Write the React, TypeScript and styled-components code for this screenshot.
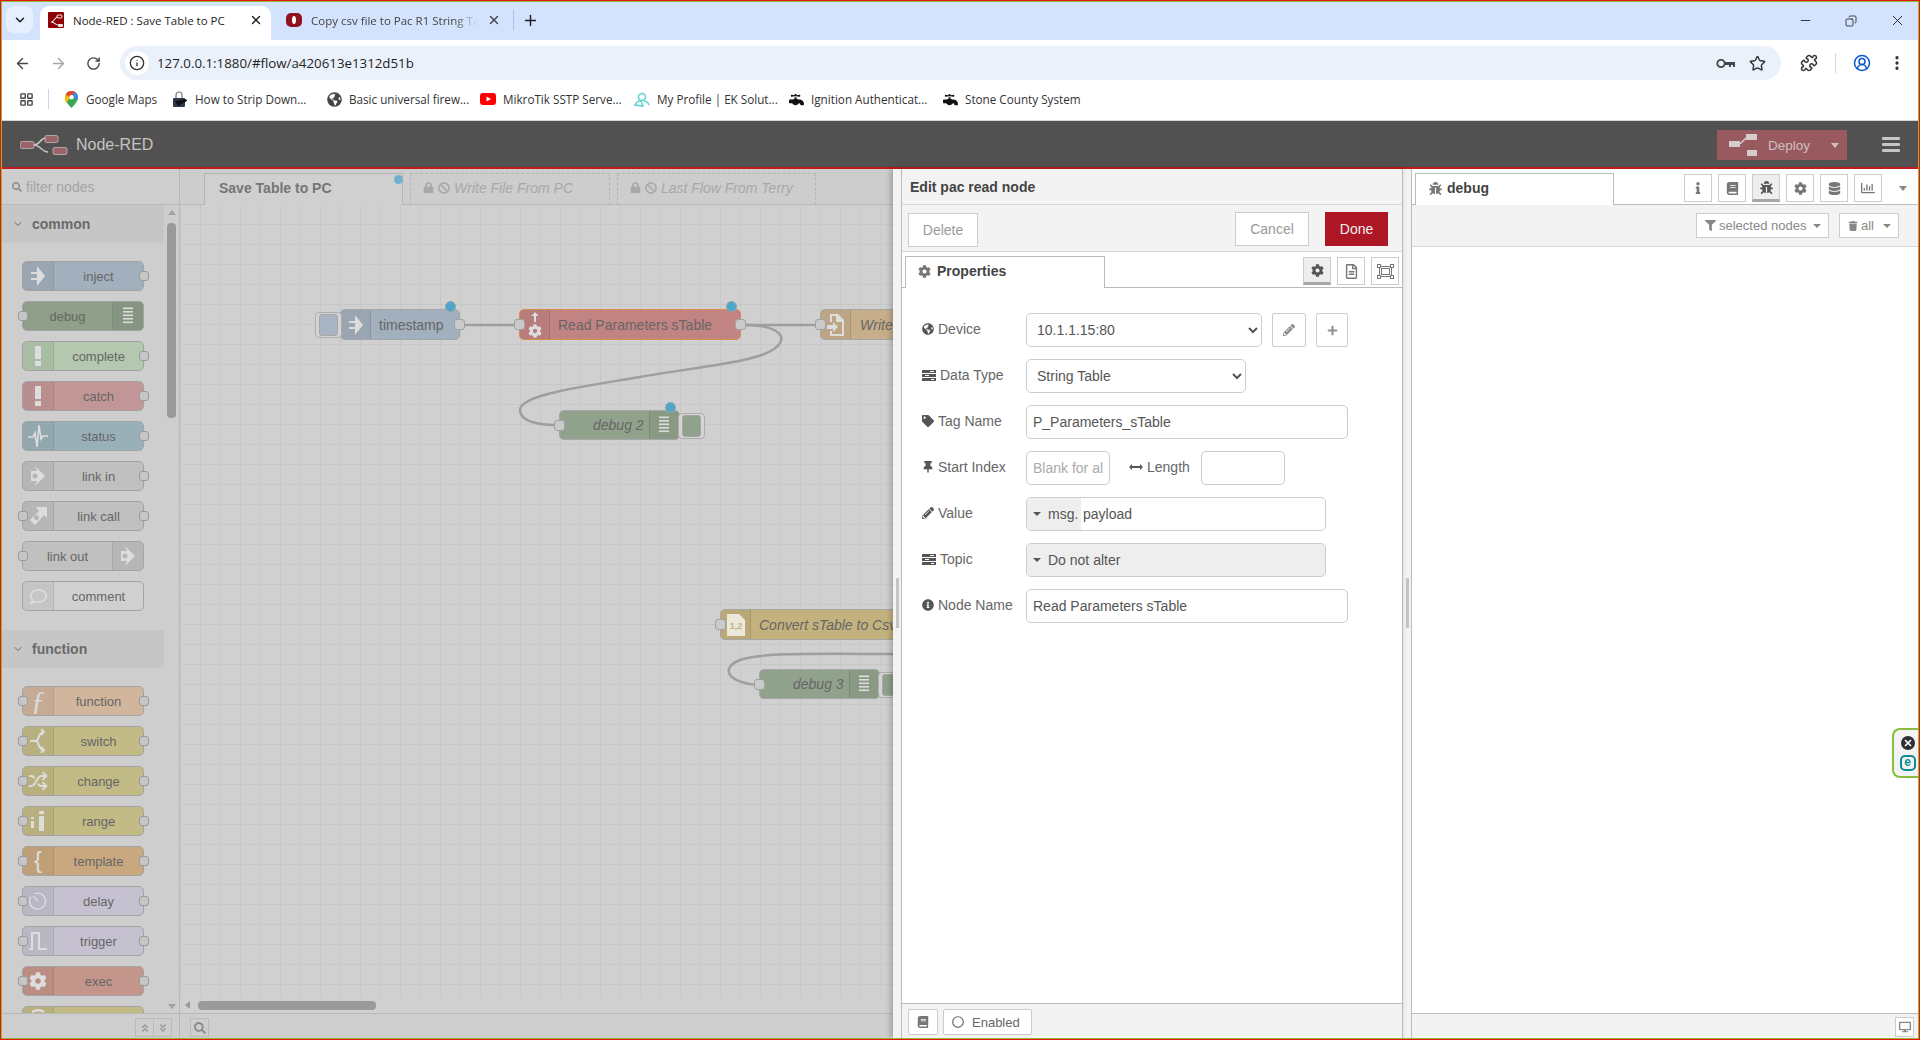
import React from 'react'
import styled, { createGlobalStyle } from 'styled-components'
import {
  ArrowLeft,
  ArrowRight,
  ChevronDown,
  CircleUserRound,
  Copy,
  EllipsisVertical,
  Info,
  LayoutGrid,
  Minus,
  Plus,
  Puzzle,
  RotateCw,
  Shuffle,
  Star,
  X,
} from 'lucide-react'
import {
  FaBan,
  FaBook,
  FaBug,
  FaCog,
  FaDatabase,
  FaDesktop,
  FaFaucet,
  FaFilter,
  FaGlobeAmericas,
  FaInfo,
  FaInfoCircle,
  FaLock,
  FaPencilAlt,
  FaPlus,
  FaRegChartBar,
  FaRegComment,
  FaRegFileAlt,
  FaSearch,
  FaTag,
  FaThumbtack,
  FaTrash,
  FaAngleDoubleDown,
  FaAngleDoubleUp,
  FaRegCircle,
} from 'react-icons/fa'

const GlobalStyle = createGlobalStyle`
  html, body { margin: 0; padding: 0; background: #fff; }
  * { box-sizing: border-box; }
  #root { width: 1920px; height: 1040px; overflow: hidden; }
`

const arial = `'Liberation Sans', Arial, sans-serif`
const segoe = `'Open Sans', 'Noto Sans', sans-serif`

const Frame = styled.div`
  position: relative;
  width: 1920px;
  height: 1040px;
  border: 1px solid #f01010;
  display: flex;
  flex-direction: column;
  overflow: hidden;
  font-family: ${arial};
  &::after {
    content: '';
    position: absolute;
    inset: 0;
    border: 1px solid #86bf3c;
    pointer-events: none;
    z-index: 20;
  }
`

/* browser chrome */
const TabStrip = styled.div`
  height: 39px;
  flex: none;
  background: #d3e3fd;
  display: flex;
  align-items: flex-end;
  padding-left: 5px;
  color: #1f1f1f;
  font-family: ${segoe};
  font-size: 11.5px;
`
const TabMenu = styled.div`
  width: 27px;
  height: 27px;
  margin-bottom: 7px;
  margin-right: 7px;
  background: #e6effe;
  border-radius: 8px;
  display: flex;
  align-items: center;
  justify-content: center;
`
const BrowserTab = styled.div<{ $active?: boolean; $w: number }>`
  width: ${(p) => p.$w}px;
  height: 34px;
  display: flex;
  align-items: center;
  padding: 0 ${(p) => (p.$active ? 8 : 10)}px 6px ${(p) => (p.$active ? 8 : 15)}px;
  gap: 9px;
  border-radius: 9px 9px 0 0;
  background: ${(p) => (p.$active ? '#fff' : 'transparent')};
  color: ${(p) => (p.$active ? '#1f1f1f' : '#444')};
  position: relative;
`
const TabTitle = styled.span<{ $fade?: boolean }>`
  flex: 1;
  white-space: nowrap;
  overflow: hidden;
  ${(p) => p.$fade && 'mask-image: linear-gradient(to right, #000 85%, transparent);'}
`
const TabSep = styled.div`
  width: 1px;
  height: 20px;
  background: #a8c0e4;
  margin: 0 8px 10px 2px;
`
const NewTab = styled.div`
  margin-bottom: 11px;
  display: flex;
`
const WindowControls = styled.div`
  margin-left: auto;
  align-self: center;
  display: flex;
  align-items: center;
  gap: 32px;
  padding-right: 13px;
`
const RestoreIcon = styled(Copy)`
  transform: scaleX(-1);
`
const Toolbar = styled.div`
  height: 40px;
  flex: none;
  background: #fff;
  display: flex;
  align-items: flex-end;
  padding: 0 0 0 13px;
  color: #474747;
`
const NavIcons = styled.div`
  display: flex;
  gap: 19px;
  align-items: center;
  height: 34px;
  margin-right: 19px;
`
const Omnibox = styled.div`
  width: 1661px;
  height: 34px;
  flex: none;
  background: #ebf1fa;
  border-radius: 17px;
  display: flex;
  align-items: center;
  padding: 0 15px 0 5px;
  font-family: ${segoe};
  font-size: 13.3px;
  color: #1f1f1f;
`
const InfoDot = styled.div`
  width: 24px;
  height: 24px;
  border-radius: 50%;
  background: #fff;
  display: flex;
  align-items: center;
  justify-content: center;
  margin-right: 8px;
`
const OmniRight = styled.div`
  margin-left: auto;
  display: flex;
  align-items: center;
  gap: 14px;
`
const ToolRight = styled.div`
  display: flex;
  align-items: center;
  height: 34px;
  gap: 17px;
  padding-left: 19px;
`
const ToolSep = styled.div`
  width: 1px;
  height: 20px;
  background: #c8d7ee;
`
const Bookmarks = styled.div`
  height: 41px;
  flex: none;
  background: #fff;
  border-bottom: 1px solid #d4d4d4;
  display: flex;
  align-items: center;
  padding: 0 0 2px 18px;
  font-family: ${segoe};
  font-size: 11.7px;
  color: #333;
`
const BookSep = styled.div`
  width: 1px;
  height: 20px;
  background: #c8d7ee;
  margin: 0 14px 0 14px;
`
const Bookmark = styled.div<{ $w: number }>`
  width: ${(p) => p.$w}px;
  flex: none;
  display: flex;
  align-items: center;
  gap: 7px;
  white-space: nowrap;
`
const BookIcon = styled.span`
  width: 16px;
  height: 16px;
  display: flex;
  align-items: center;
  justify-content: center;
  flex: none;
`

/* node-red header */
const Header = styled.div`
  height: 48px;
  flex: none;
  background: #515151;
  border-bottom: 2px solid #c21a1a;
  display: flex;
  align-items: center;
  padding: 2px 0 0 19px;
  color: #c8c8c8;
`
const Brand = styled.div`
  font-size: 16px;
  margin-left: 8px;
  color: #c4c4c4;
`
const Deploy = styled.div`
  margin-left: auto;
  width: 130px;
  height: 30px;
  background: #985a5f;
  display: flex;
  align-items: center;
  padding-left: 12px;
  font-size: 13.5px;
  color: #cfc0c1;
`
const DeployText = styled.span`
  margin-left: 11px;
`
const DeployCaret = styled.span`
  margin-left: auto;
  margin-right: 8px;
  width: 0;
  height: 0;
  border-left: 4.5px solid transparent;
  border-right: 4.5px solid transparent;
  border-top: 5px solid #cfc0c1;
`
const Burger = styled.div`
  width: 18px;
  margin: -2px 19px 0 35px;
  display: flex;
  flex-direction: column;
  gap: 3px;
  & > i {
    display: block;
    height: 3px;
    background: #c6c6c6;
    border-radius: 1px;
  }
`

const Main = styled.div`
  flex: 1;
  min-height: 0;
  display: flex;
`

/* palette */
const Palette = styled.div`
  width: 179px;
  flex: none;
  background: #cecece;
  border-right: 1px solid #b8b8b8;
  display: flex;
  flex-direction: column;
`
const PaletteSearch = styled.div`
  height: 36px;
  flex: none;
  border-bottom: 1px solid #b8b8b8;
  display: flex;
  align-items: center;
  padding-left: 11px;
  gap: 4px;
  color: #a4a4a4;
  font-size: 14px;
`
const PaletteBody = styled.div`
  flex: 1;
  min-height: 0;
  display: flex;
`
const PaletteList = styled.div`
  flex: 1;
  min-width: 0;
  overflow: hidden;
`
const CategoryHead = styled.div<{ $gap?: number }>`
  height: 38px;
  margin-top: ${(p) => p.$gap ?? 0}px;
  background: #c6c6c6;
  display: flex;
  align-items: center;
  padding-left: 11px;
  gap: 8px;
  font-size: 14px;
  font-weight: 700;
  color: #6a6a6a;
`
const CategoryBody = styled.div`
  padding: 18px 0 0 21px;
`
const PNode = styled.div<{ $color: string; $right?: boolean }>`
  position: relative;
  width: 122px;
  height: 30px;
  margin-bottom: 10px;
  background: ${(p) => p.$color};
  border: 1px solid #a3a3a3;
  border-radius: 5px;
  display: flex;
  flex-direction: ${(p) => (p.$right ? 'row-reverse' : 'row')};
  font-size: 13px;
  color: #666;
`
const PIcon = styled.div<{ $right?: boolean }>`
  width: 31px;
  flex: none;
  background: rgba(0, 0, 0, 0.05);
  border-${(p) => (p.$right ? 'left' : 'right')}: 1px solid rgba(0, 0, 0, 0.08);
  border-radius: ${(p) => (p.$right ? '0 4px 4px 0' : '4px 0 0 4px')};
  display: flex;
  align-items: center;
  justify-content: center;
  color: #dddddd;
  overflow: hidden;
`
const PLabel = styled.div`
  flex: 1;
  display: flex;
  align-items: center;
  justify-content: center;
`
const Port = styled.span<{ $side: 'left' | 'right' }>`
  position: absolute;
  ${(p) => p.$side}: -5.5px;
  top: 9px;
  width: 10px;
  height: 10px;
  background: #c6c6c6;
  border: 1px solid #9b9b9b;
  border-radius: 3px;
`
const PaletteScroll = styled.div`
  width: 15px;
  flex: none;
  display: flex;
  flex-direction: column;
  align-items: center;
  padding-top: 5px;
`
const ArrowUp = styled.span`
  width: 0;
  height: 0;
  border-left: 4.5px solid transparent;
  border-right: 4.5px solid transparent;
  border-bottom: 5px solid #a2a2a2;
`
const ArrowDown = styled.span`
  margin-top: auto;
  margin-bottom: 4px;
  width: 0;
  height: 0;
  border-left: 4.5px solid transparent;
  border-right: 4.5px solid transparent;
  border-top: 5px solid #a2a2a2;
`
const PaletteThumb = styled.div`
  width: 9px;
  height: 195px;
  margin-top: 8px;
  background: #9a9a9a;
  border-radius: 4px;
`
const PaletteFoot = styled.div`
  height: 26px;
  flex: none;
  border-top: 1px solid #b8b8b8;
  display: flex;
  align-items: flex-start;
  justify-content: flex-end;
  padding: 4px 7px 0 0;
`
const FootButton = styled.div`
  width: 19px;
  height: 19px;
  border: 1px solid #bbb;
  margin-left: -1px;
  display: flex;
  align-items: center;
  justify-content: center;
  color: #9a9a9a;
  font-size: 10px;
`

/* workspace */
const Workspace = styled.div`
  width: 713px;
  flex: none;
  display: flex;
  flex-direction: column;
  background: #d0d0d0;
`
const WsTabs = styled.div`
  height: 36px;
  flex: none;
  background: #cdcdcd;
  border-bottom: 1px solid #b8b8b8;
  display: flex;
  align-items: flex-end;
  padding-left: 24px;
  gap: 7px;
`
const WsTab = styled.div<{ $active?: boolean; $w: number }>`
  position: relative;
  width: ${(p) => p.$w}px;
  height: 32px;
  margin-bottom: -1px;
  padding: 0 0 3px ${(p) => (p.$active ? 14 : 12)}px;
  display: flex;
  align-items: center;
  gap: 4px;
  font-size: 14px;
  white-space: nowrap;
  border: 1px ${(p) => (p.$active ? 'solid' : 'dashed')} #b5b5b5;
  border-bottom: ${(p) => (p.$active ? 'none' : '1px solid #b8b8b8')};
  background: ${(p) => (p.$active ? '#d0d0d0' : 'transparent')};
  color: ${(p) => (p.$active ? '#757575' : '#a8a8a8')};
  font-weight: ${(p) => (p.$active ? 700 : 400)};
  font-style: ${(p) => (p.$active ? 'normal' : 'italic')};
  & > svg {
    flex: none;
  }
`
const TabDot = styled.span`
  position: absolute;
  right: -1px;
  top: 1px;
  width: 9px;
  height: 9px;
  border-radius: 50%;
  background: #6fb0cf;
`
const Canvas = styled.div`
  position: relative;
  flex: 1;
  min-height: 0;
  overflow: hidden;
  background-color: #d0d0d0;
  background-image: linear-gradient(to right, #c7c7c7 1px, transparent 1px),
    linear-gradient(to bottom, #c7c7c7 1px, transparent 1px);
  background-size: 20px 20px;
  background-position: 0 19px;
`
const Wires = styled.svg`
  position: absolute;
  left: 0;
  top: 0;
`
const FlowNode = styled.div<{ $x: number; $y: number; $w: number; $h?: number; $color: string; $selected?: boolean; $right?: boolean }>`
  position: absolute;
  left: ${(p) => p.$x}px;
  top: ${(p) => p.$y}px;
  width: ${(p) => p.$w}px;
  height: ${(p) => p.$h ?? 31}px;
  background: ${(p) => p.$color};
  border: 1px solid ${(p) => (p.$selected ? '#d58d49' : '#a6a6a6')};
  border-radius: 5px;
  display: flex;
  flex-direction: ${(p) => (p.$right ? 'row-reverse' : 'row')};
  font-size: 14px;
  color: #666;
`
const FlowIcon = styled.div<{ $right?: boolean }>`
  width: 30px;
  flex: none;
  background: rgba(0, 0, 0, 0.05);
  border-${(p) => (p.$right ? 'left' : 'right')}: 1px solid rgba(0, 0, 0, 0.1);
  border-radius: ${(p) => (p.$right ? '0 4px 4px 0' : '4px 0 0 4px')};
  display: flex;
  align-items: center;
  justify-content: center;
  color: #dddddd;
`
const FlowLabel = styled.div<{ $pad?: number; $italic?: boolean }>`
  flex: 1;
  display: flex;
  align-items: center;
  white-space: nowrap;
  overflow: hidden;
  padding-left: ${(p) => p.$pad ?? 9}px;
  font-style: ${(p) => (p.$italic ? 'italic' : 'normal')};
`
const FlowPort = styled.span<{ $side: 'left' | 'right' }>`
  position: absolute;
  ${(p) => p.$side}: -6px;
  top: 9px;
  width: 11px;
  height: 11px;
  background: #cacaca;
  border: 1px solid #a2a2a2;
  border-radius: 3px;
`
const StatusDot = styled.span`
  position: absolute;
  right: 3px;
  top: -9px;
  width: 11px;
  height: 11px;
  border-radius: 50%;
  background: #4ea7c9;
  border: 1px solid #8fa7ae;
`
const FlowButton = styled.div<{ $side: 'left' | 'right'; $color: string }>`
  position: absolute;
  ${(p) => p.$side}: -26px;
  top: 2px;
  width: 27px;
  height: 26px;
  border: 1px solid #aeaeae;
  background: #d4d4d4;
  border-radius: 4px;
  display: flex;
  align-items: center;
  justify-content: center;
  &::after {
    content: '';
    width: 17px;
    height: 20px;
    border-radius: 3px;
    background: ${(p) => p.$color};
    border: 1px solid #a6a6a6;
  }
`
const HScroll = styled.div`
  height: 16px;
  flex: none;
  display: flex;
  align-items: center;
  padding-left: 5px;
`
const ArrowLeftTri = styled.span`
  width: 0;
  height: 0;
  border-top: 4.5px solid transparent;
  border-bottom: 4.5px solid transparent;
  border-right: 5px solid #9a9a9a;
`
const HThumb = styled.div`
  width: 178px;
  height: 9px;
  margin-left: 8px;
  background: #9a9a9a;
  border-radius: 4px;
`
const WsFoot = styled.div`
  height: 26px;
  flex: none;
  border-top: 1px solid #b8b8b8;
  background: #cecece;
  padding: 4px 0 0 10px;
`
const ZoomButton = styled.div`
  width: 19px;
  height: 19px;
  border: 1px solid #bbb;
  display: flex;
  align-items: center;
  justify-content: center;
  color: #8c8c8c;
  font-size: 12px;
`

/* edit tray */
const Tray = styled.div`
  position: relative;
  z-index: 2;
  width: 510px;
  flex: none;
  display: flex;
  background: #f3f3f3;
  box-shadow: -2px 0 6px rgba(0, 0, 0, 0.25);
  border-right: 1px solid #bbb;
`
const TrayHandle = styled.div`
  width: 8px;
  flex: none;
  display: flex;
  align-items: flex-start;
  justify-content: center;
  padding-top: 409px;
  & > i {
    display: block;
    width: 3px;
    height: 50px;
    background: #c4c4c4;
  }
`
const TrayPanel = styled.div`
  flex: 1;
  min-width: 0;
  display: flex;
  flex-direction: column;
  border-left: 1px solid #bbb;
`
const TrayTitle = styled.div`
  height: 36px;
  flex: none;
  display: flex;
  align-items: center;
  padding-left: 8px;
  font-size: 14px;
  font-weight: 700;
  color: #444;
  border-bottom: 1px solid #d8d8d8;
`
const TrayActions = styled.div`
  height: 47px;
  flex: none;
  display: flex;
  align-items: flex-start;
  padding: 7px 14px 0 6px;
  border-bottom: 1px solid #d8d8d8;
`
const TrayButton = styled.div<{ $primary?: boolean; $w: number; $top?: number; $left?: number }>`
  width: ${(p) => p.$w}px;
  height: 34px;
  margin: ${(p) => p.$top ?? 0}px 0 0 ${(p) => p.$left ?? 0}px;
  display: flex;
  align-items: center;
  justify-content: center;
  font-size: 14px;
  background: ${(p) => (p.$primary ? '#ad1625' : '#fff')};
  color: ${(p) => (p.$primary ? '#eee' : '#999')};
  border: 1px solid ${(p) => (p.$primary ? '#ad1625' : '#ccc')};
`
const Spacer = styled.div`
  flex: 1;
`
const TrayTabs = styled.div`
  height: 36px;
  flex: none;
  background: #fff;
  border-bottom: 1px solid #bbb;
  display: flex;
  align-items: flex-end;
  padding-left: 3px;
`
const TrayTab = styled.div`
  width: 200px;
  height: 32px;
  margin-bottom: -1px;
  background: #fff;
  border: 1px solid #bbb;
  border-bottom: none;
  display: flex;
  align-items: center;
  padding: 0 0 3px 12px;
  gap: 6px;
  font-size: 14px;
  font-weight: 700;
  color: #444;
  & > svg {
    color: #777;
  }
`
const TabTools = styled.div`
  margin-left: auto;
  display: flex;
  gap: 6px;
  padding: 0 3px 2px 0;
`
const IconButton = styled.div<{ $active?: boolean }>`
  width: 28px;
  height: 28px;
  border: 1px solid #ccc;
  border-bottom: ${(p) => (p.$active ? '3px solid #a6a6a6' : '1px solid #ccc')};
  background: ${(p) => (p.$active ? '#eee' : '#fff')};
  display: flex;
  align-items: center;
  justify-content: center;
  color: ${(p) => (p.$active ? '#555' : '#777')};
`
const TrayForm = styled.div`
  flex: 1;
  min-height: 0;
  background: #fff;
  padding: 25px 0 0 20px;
`
const FormRow = styled.div`
  height: 34px;
  margin-bottom: 12px;
  display: flex;
  align-items: center;
`
const FieldLabel = styled.label<{ $w?: number; $indent?: number }>`
  width: ${(p) => p.$w ?? 104}px;
  flex: none;
  display: flex;
  align-items: center;
  gap: 4px;
  padding: 0 0 2px ${(p) => p.$indent ?? 0}px;
  font-size: 14px;
  color: #666;
  & > svg {
    color: #555;
    flex: none;
  }
`
const Select = styled.select<{ $w: number }>`
  width: ${(p) => p.$w}px;
  height: 34px;
  border: 1px solid #ccc;
  border-radius: 5px;
  background: #fff;
  color: #555;
  font-family: ${arial};
  font-size: 14px;
  padding: 0 6px;
`
const TextInput = styled.input<{ $w: number }>`
  width: ${(p) => p.$w}px;
  height: 34px;
  border: 1px solid #ccc;
  border-radius: 5px;
  background: #fff;
  color: #555;
  font-family: ${arial};
  font-size: 14px;
  padding: 0 6px;
  &::placeholder {
    color: #aaa;
  }
`
const SquareButton = styled.div<{ $w: number }>`
  width: ${(p) => p.$w}px;
  height: 34px;
  margin-left: 10px;
  border: 1px solid #ccc;
  border-radius: 2px;
  display: flex;
  align-items: center;
  justify-content: center;
  color: #8e8e8e;
`
const TypedInput = styled.div<{ $filled?: boolean }>`
  width: 300px;
  height: 34px;
  border: 1px solid #ccc;
  border-radius: 5px;
  display: flex;
  align-items: center;
  overflow: hidden;
  font-size: 14px;
  color: #555;
  background: ${(p) => (p.$filled ? '#eee' : '#fff')};
`
const TypeSelect = styled.div<{ $w?: number }>`
  width: ${(p) => (p.$w ? `${p.$w}px` : 'auto')};
  height: 100%;
  background: #eee;
  display: flex;
  align-items: center;
  padding-left: 6px;
  gap: 7px;
  flex: none;
`
const Caret = styled.span`
  width: 0;
  height: 0;
  border-left: 4px solid transparent;
  border-right: 4px solid transparent;
  border-top: 4px solid #555;
`
const TypedValue = styled.span`
  padding-left: 2px;
`
const TrayFoot = styled.div`
  height: 36px;
  flex: none;
  border-top: 1px solid #bbb;
  display: flex;
  align-items: flex-start;
  padding: 5px 0 0 6px;
  gap: 5px;
`
const FootBtn = styled.div<{ $w: number }>`
  width: ${(p) => p.$w}px;
  height: 26px;
  background: #fff;
  border: 1px solid #ccc;
  border-radius: 2px;
  display: flex;
  align-items: center;
  justify-content: center;
  font-size: 13px;
  color: #666;
`
const EnableBtn = styled(FootBtn)`
  justify-content: flex-start;
  padding-left: 8px;
  gap: 8px;
`

/* debug sidebar */
const Gutter = styled.div`
  width: 8px;
  flex: none;
  background: #f3f3f3;
  display: flex;
  align-items: flex-start;
  justify-content: center;
  padding-top: 409px;
  & > i {
    display: block;
    width: 3px;
    height: 50px;
    background: #c4c4c4;
  }
`
const Sidebar = styled.div`
  position: relative;
  flex: 1;
  min-width: 0;
  display: flex;
  flex-direction: column;
  background: #fff;
  border-left: 1px solid #bbb;
`
const SideTabs = styled.div`
  height: 36px;
  flex: none;
  border-bottom: 1px solid #bbb;
  display: flex;
  align-items: flex-end;
  padding-left: 3px;
`
const SideTab = styled.div`
  width: 199px;
  height: 32px;
  margin-bottom: -1px;
  background: #fff;
  border: 1px solid #bbb;
  border-bottom: none;
  display: flex;
  align-items: center;
  padding: 0 0 3px 13px;
  gap: 5px;
  font-size: 14px;
  font-weight: 700;
  color: #444;
  & > svg {
    color: #777;
  }
`
const SideTools = styled.div`
  margin-left: 70px;
  display: flex;
  align-items: center;
  gap: 6px;
  padding-bottom: 2px;
`
const SideCaret = styled.span`
  margin-left: 11px;
  width: 0;
  height: 0;
  border-left: 4.5px solid transparent;
  border-right: 4.5px solid transparent;
  border-top: 5px solid #888;
`
const SideBar2 = styled.div`
  height: 42px;
  flex: none;
  background: #f3f3f3;
  border-bottom: 1px solid #d8d8d8;
  display: flex;
  align-items: flex-start;
  justify-content: flex-end;
  padding: 8px 20px 0 0;
  gap: 10px;
`
const FilterBtn = styled.div<{ $w: number }>`
  width: ${(p) => p.$w}px;
  height: 25px;
  background: #fff;
  border: 1px solid #ccc;
  display: flex;
  align-items: center;
  padding-left: 8px;
  gap: 3px;
  font-size: 13px;
  color: #888;
`
const FilterCaret = styled.span`
  margin-left: auto;
  margin-right: 7px;
  width: 0;
  height: 0;
  border-left: 4px solid transparent;
  border-right: 4px solid transparent;
  border-top: 4px solid #888;
`
const SideContent = styled.div`
  flex: 1;
`
const SideFoot = styled.div`
  height: 26px;
  flex: none;
  background: #f3f3f3;
  border-top: 1px solid #bbb;
  display: flex;
  justify-content: flex-end;
  padding: 3px 5px 0 0;
`
const MonitorBtn = styled.div`
  width: 19px;
  height: 20px;
  background: #fff;
  border: 1px solid #ccc;
  display: flex;
  align-items: center;
  justify-content: center;
  color: #888;
`
const EsetBadge = styled.div`
  position: absolute;
  right: 0;
  top: 559px;
  width: 27px;
  height: 50px;
  background: #f3f3f3;
  border: 2px solid #86bf3c;
  border-right: none;
  border-radius: 8px 0 0 8px;
  display: flex;
  flex-direction: column;
  align-items: center;
  justify-content: center;
  gap: 5px;
  padding-left: 2px;
`
const EsetMark = styled.div`
  width: 16px;
  height: 16px;
  border: 2px solid #0b8a99;
  border-radius: 5px;
  color: #0b8a99;
  font-family: ${arial};
  font-size: 12px;
  font-weight: 700;
  line-height: 11px;
  text-align: center;
`
const EsetClose = styled.div`
  width: 14px;
  height: 14px;
  border-radius: 50%;
  background: #2e2e33;
  display: flex;
  align-items: center;
  justify-content: center;
  color: #fff;
`
const SerifGlyph = styled.span<{ $size: number }>`
  font-family: 'Liberation Serif', serif;
  font-style: italic;
  font-size: ${(p) => p.$size}px;
  line-height: 1;
  color: #dddddd;
`
const BraceGlyph = styled.span`
  font-family: 'Liberation Sans', sans-serif;
  font-size: 24px;
  line-height: 1;
  margin-top: -3px;
  color: #dddddd;
`

type GlyphKind =
  | 'inject' | 'debug' | 'alert' | 'status' | 'linkIn' | 'linkCall' | 'comment' | 'func' | 'switch'
  | 'change' | 'range' | 'template' | 'delay' | 'trigger' | 'exec' | 'pacRead' | 'fileOut' | 'csv' | 'split'

const Glyph = ({ kind }: { kind: GlyphKind }) => {
  switch (kind) {
    case 'inject':
      return (
        <svg width="16" height="22" viewBox="0 0 16 22" fill="currentColor">
          <path d="M7 1l8 10-8 10v-6H1v-2h6V9H1V7h6z" />
        </svg>
      )
    case 'debug':
      return (
        <svg width="11" height="18" viewBox="0 0 11 18" fill="currentColor">
          <rect y="0.5" width="10" height="1.6" />
          <rect y="4" width="10" height="1.6" />
          <rect y="7.5" width="10" height="1.6" />
          <rect y="11" width="10" height="1.6" />
          <rect y="14.5" width="10" height="1.6" />
        </svg>
      )
    case 'alert':
      return (
        <svg width="8" height="22" viewBox="0 0 8 22" fill="currentColor">
          <rect x="1" y="1" width="6" height="13" />
          <rect x="1" y="16" width="6" height="5" />
        </svg>
      )
    case 'status':
      return (
        <svg width="20" height="24" viewBox="0 0 20 24" fill="none" stroke="currentColor" strokeWidth="1.6">
          <path d="M0 13h5l2-4 2 14 2-22 2 14 2-3h5" />
        </svg>
      )
    case 'linkIn':
      return (
        <svg width="14" height="22" viewBox="0 0 14 22" fill="currentColor" fillRule="evenodd">
          <path d="M4 1l10 10-10 10 2-5H0V6h6zM4 8.500a2.500 2.500 0 1 0 .01 0z" />
        </svg>
      )
    case 'linkCall':
      return (
        <svg width="18" height="20" viewBox="0 0 18 20" fill="currentColor" fillRule="evenodd">
          <path d="M7 1h11v11l-3-3-9 10-5-5 9-9zM7.500 9a2.500 2.500 0 1 0 .01 0z" />
        </svg>
      )
    case 'comment':
      return <FaRegComment size={17} />
    case 'func':
      return <SerifGlyph $size={27}>ƒ</SerifGlyph>
    case 'split':
      return (
        <svg width="18" height="26" viewBox="0 0 18 26" fill="none" stroke="currentColor" strokeWidth="2.5">
          <path d="M3 4c4-2 9-2 12 0" />
        </svg>
      )
    case 'switch':
      return (
        <svg width="16" height="24" viewBox="0 0 16 24" fill="none" stroke="currentColor" strokeWidth="2">
          <path d="M0 12h6c3 0 2-8 7-9M6 12c3 0 2 8 7 9" />
          <path d="M11 0l3 3-3 3M11 18l3 3-3 3" />
        </svg>
      )
    case 'change':
      return <Shuffle size={20} strokeWidth={2.2} />
    case 'range':
      return (
        <svg width="14" height="20" viewBox="0 0 14 20" fill="currentColor">
          <rect x="0" y="6" width="3" height="2" />
          <rect x="0" y="10" width="3" height="7" />
          <rect x="8" y="0" width="5" height="3" />
          <rect x="8" y="5" width="5" height="15" />
        </svg>
      )
    case 'template':
      return <BraceGlyph>{'{'}</BraceGlyph>
    case 'delay':
      return (
        <svg width="18" height="18" viewBox="0 0 18 18" fill="none" stroke="currentColor" strokeWidth="1.3">
          <path d="M6 1.600A8 8 0 1 1 2 4.600" />
          <path d="M4 4l5 5" />
        </svg>
      )
    case 'trigger':
      return (
        <svg width="18" height="20" viewBox="0 0 18 20" fill="none" stroke="currentColor" strokeWidth="2">
          <path d="M0 18h3V2h7v16h8" />
        </svg>
      )
    case 'exec':
      return <FaCog size={18} />
    case 'pacRead':
      return (
        <svg width="18" height="26" viewBox="0 0 18 26" fill="currentColor">
          <path d="M9 0l3.500 4H10v6H8V4H5.500z" />
          <g transform="translate(2 12)">
            <FaCog size={14} />
          </g>
        </svg>
      )
    case 'fileOut':
      return (
        <svg width="18" height="24" viewBox="0 0 18 24" fill="currentColor" fillRule="evenodd">
          <path d="M3 1h8l6 6v16H3v-5h2v3h10V9h-6V3H5v6H3z" />
          <path d="M0 12h6v-3l5 5-5 5v-3H0z" />
        </svg>
      )
    case 'csv':
      return (
        <svg width="20" height="24" viewBox="0 0 20 24">
          <path d="M1 1h12l6 6v16H1z" fill="#ebe8dc" />
          <text x="10" y="16" fontSize="9" fontWeight="700" textAnchor="middle" fontFamily={arial} fill="#c4b27e">
            1,2
          </text>
        </svg>
      )
  }
}

const BarsIcon = () => (
  <svg width="14" height="11" viewBox="0 0 14 11" fill="currentColor">
    <rect width="14" height="3" />
    <rect y="4" width="14" height="3" />
    <rect y="8" width="14" height="3" />
    <rect x="8" y="1" width="4" height="1" fill="#fff" />
    <rect x="3" y="5" width="4" height="1" fill="#fff" />
    <rect x="9" y="9" width="3" height="1" fill="#fff" />
  </svg>
)

const FrameIcon = () => (
  <svg width="17" height="15" viewBox="0 0 17 15" fill="none" stroke="#777" strokeWidth="1">
    <rect x="2.500" y="2.500" width="12" height="10" />
    <rect x="4.500" y="4.500" width="8" height="6" />
    <rect x="0.500" y="0.500" width="3" height="3" fill="#fff" />
    <rect x="13.500" y="0.500" width="3" height="3" fill="#fff" />
    <rect x="0.500" y="11.500" width="3" height="3" fill="#fff" />
    <rect x="13.500" y="11.500" width="3" height="3" fill="#fff" />
  </svg>
)

const KeyIcon = () => (
  <svg width="19" height="11" viewBox="0 0 19 11" fill="none">
    <circle cx="5" cy="5.500" r="3.700" stroke="#444" strokeWidth="1.800" />
    <path d="M9 4h10v5h-2V7h-2v2h-2V7H9z" fill="#444" />
  </svg>
)

const Logo = () => (
  <svg width="48" height="20" viewBox="0 0 48 20">
    <path d="M14 10c6 0 6-7 12-7M14 10c6 0 8 7 14 7" fill="none" stroke="#c9c9c9" strokeWidth="1.500" />
    <rect x="0" y="6.500" width="14" height="7" rx="1.500" fill="#9a6468" stroke="#c9c9c9" strokeWidth="0.700" />
    <rect x="25" y="0.500" width="13" height="7" rx="1.500" fill="#9a6468" stroke="#c9c9c9" strokeWidth="0.700" />
    <rect x="33" y="12.500" width="14" height="7" rx="1.500" fill="#9a6468" stroke="#c9c9c9" strokeWidth="0.700" />
  </svg>
)

const DeployIcon = () => (
  <svg width="28" height="22" viewBox="0 0 28 22" fill="#d6cccc">
    <rect x="0" y="7" width="11" height="6" />
    <path d="M11 10l6-6" stroke="#d6cccc" strokeWidth="1.600" />
    <rect x="17" y="0" width="11" height="6" />
    <rect x="18" y="16" width="10" height="6" />
  </svg>
)

const RedFavicon = () => (
  <svg width="16" height="16" viewBox="0 0 16 16">
    <rect width="16" height="16" rx="1" fill="#8f0000" />
    <path d="M3 10c4 0 3-5 7-5M3 10c4 0 4 3 7 3" fill="none" stroke="#eee" strokeWidth="1.100" />
    <rect x="9" y="3" width="5" height="3" rx="1" fill="none" stroke="#eee" strokeWidth="1" />
    <rect x="10" y="12" width="5" height="3" rx="1" fill="#eee" />
  </svg>
)

const OptoFavicon = () => (
  <svg width="16" height="14" viewBox="0 0 16 14">
    <rect width="16" height="14" rx="5" fill="#8f1220" />
    <ellipse cx="8" cy="7" rx="2" ry="4" fill="#fff" />
  </svg>
)

const MapsIcon = () => (
  <svg width="13" height="17" viewBox="0 0 13 17">
    <path d="M6.500 0C2.900 0 0 2.900 0 6.500 0 11 6.500 17 6.500 17S13 11 13 6.500C13 2.900 10.100 0 6.500 0z" fill="#34a853" />
    <path d="M1 3l4 4-4 5c-.6-1.600-1-3-1-5.500C0 5 .4 4 1 3z" fill="#fbbc04" />
    <path d="M1 3C2 1 4 0 6.500 0 8 0 9 .4 10 1L5 7z" fill="#ea4335" />
    <path d="M10 1c1.800 1 3 3 3 5.500C13 7.500 12.800 8 12.500 9L8 5z" fill="#4285f4" />
    <circle cx="6.500" cy="6.300" r="2.200" fill="#fff" />
  </svg>
)

const StripIcon = () => (
  <svg width="16" height="17" viewBox="0 0 16 17">
    <path d="M4 7V4a3 3 0 0 1 6 0v3" fill="none" stroke="#777" strokeWidth="1.200" />
    <rect x="1" y="7" width="12" height="9" rx="1" fill="#2f3b4c" />
    <path d="M3 10l11-2 1 2-9 5z" fill="#111" />
  </svg>
)

const YoutubeIcon = () => (
  <svg width="16" height="12" viewBox="0 0 16 12">
    <rect width="16" height="12" rx="3" fill="#f00" />
    <path d="M6.500 3.500L11 6l-4.500 2.500z" fill="#fff" />
  </svg>
)

const ProfileIcon = () => (
  <svg width="16" height="15" viewBox="0 0 16 15" fill="none" stroke="#59d5ca" strokeWidth="1.500">
    <circle cx="8" cy="5" r="3.500" />
    <path d="M1 13c1-3 4-4 6-4l2 5zM15 13c-1-3-3-4-5-4" />
  </svg>
)

type PaletteItem = { label: string; color: string; kind: GlyphKind; right?: boolean; left?: boolean; out?: boolean }

const commonNodes: PaletteItem[] = [
  { label: 'inject', color: '#a2afbc', kind: 'inject', out: true },
  { label: 'debug', color: '#8f9f89', kind: 'debug', right: true, left: true },
  { label: 'complete', color: '#b3c8ae', kind: 'alert', out: true },
  { label: 'catch', color: '#c29697', kind: 'alert', out: true },
  { label: 'status', color: '#9ab0b8', kind: 'status', out: true },
  { label: 'link in', color: '#c0c0c0', kind: 'linkIn', out: true },
  { label: 'link call', color: '#c0c0c0', kind: 'linkCall', left: true, out: true },
  { label: 'link out', color: '#c0c0c0', kind: 'linkIn', right: true, left: true },
  { label: 'comment', color: '#d0d0d0', kind: 'comment' },
]

const functionNodes: PaletteItem[] = [
  { label: 'function', color: '#d1b59c', kind: 'func', left: true, out: true },
  { label: 'switch', color: '#c2bb86', kind: 'switch', left: true, out: true },
  { label: 'change', color: '#c2bb86', kind: 'change', left: true, out: true },
  { label: 'range', color: '#c2bb86', kind: 'range', left: true, out: true },
  { label: 'template', color: '#c9a87f', kind: 'template', left: true, out: true },
  { label: 'delay', color: '#c5c1d0', kind: 'delay', left: true, out: true },
  { label: 'trigger', color: '#c5c1d0', kind: 'trigger', left: true, out: true },
  { label: 'exec', color: '#c4958a', kind: 'exec', left: true, out: true },
  { label: '', color: '#c2bb86', kind: 'split', left: true, out: true },
]

const PaletteNode = ({ node }: { node: PaletteItem }) => (
  <PNode $color={node.color} $right={node.right}>
    {node.left && <Port $side="left" />}
    <PIcon $right={node.right}>
      <Glyph kind={node.kind} />
    </PIcon>
    <PLabel>{node.label}</PLabel>
    {node.out && <Port $side="right" />}
  </PNode>
)

const bookmarks = [
  { label: 'Google Maps', w: 109, icon: <MapsIcon /> },
  { label: 'How to Strip Down...', w: 154, icon: <StripIcon /> },
  { label: 'Basic universal firew...', w: 154, icon: <FaGlobeAmericas size={15} color="#444" /> },
  { label: 'MikroTik SSTP Serve...', w: 154, icon: <YoutubeIcon /> },
  { label: 'My Profile | EK Solut...', w: 154, icon: <ProfileIcon /> },
  { label: 'Ignition Authenticat...', w: 154, icon: <FaFaucet size={15} color="#111" /> },
  { label: 'Stone County System', w: 140, icon: <FaFaucet size={15} color="#111" /> },
]

export default function App() {
  return (
    <Frame>
      <GlobalStyle />
      <TabStrip>
        <TabMenu>
          <ChevronDown size={14} strokeWidth={2.6} />
        </TabMenu>
        <BrowserTab $active $w={231}>
          <RedFavicon />
          <TabTitle>Node-RED : Save Table to PC</TabTitle>
          <X size={14} strokeWidth={2.4} />
        </BrowserTab>
        <BrowserTab $w={240}>
          <OptoFavicon />
          <TabTitle $fade>Copy csv file to Pac R1 String Table</TabTitle>
          <X size={14} strokeWidth={2.4} />
        </BrowserTab>
        <TabSep />
        <NewTab>
          <Plus size={17} strokeWidth={2} />
        </NewTab>
        <WindowControls>
          <Minus size={15} strokeWidth={1.4} />
          <RestoreIcon size={12} strokeWidth={1.6} />
          <X size={17} strokeWidth={1.3} />
        </WindowControls>
      </TabStrip>
      <Toolbar>
        <NavIcons>
          <ArrowLeft size={17} />
          <ArrowRight size={17} color="#a6a6a6" />
          <RotateCw size={15} strokeWidth={2.2} />
        </NavIcons>
        <Omnibox>
          <InfoDot>
            <Info size={16} strokeWidth={2} color="#333" />
          </InfoDot>
          127.0.0.1:1880/#flow/a420613e1312d51b
          <OmniRight>
            <KeyIcon />
            <Star size={17} strokeWidth={2} color="#333" />
          </OmniRight>
        </Omnibox>
        <ToolRight>
          <Puzzle size={18} strokeWidth={2} color="#333" />
          <ToolSep />
          <CircleUserRound size={18} strokeWidth={2} color="#0b57d0" />
          <EllipsisVertical size={18} strokeWidth={2.4} color="#333" />
        </ToolRight>
      </Toolbar>
      <Bookmarks>
        <LayoutGrid size={15} strokeWidth={2.2} color="#444" />
        <BookSep />
        {bookmarks.map((b) => (
          <Bookmark key={b.label} $w={b.w}>
            <BookIcon>{b.icon}</BookIcon>
            {b.label}
          </Bookmark>
        ))}
      </Bookmarks>
      <Header>
        <Logo />
        <Brand>Node-RED</Brand>
        <Deploy>
          <DeployIcon />
          <DeployText>Deploy</DeployText>
          <DeployCaret />
        </Deploy>
        <Burger>
          <i />
          <i />
          <i />
        </Burger>
      </Header>
      <Main>
        <Palette>
          <PaletteSearch>
            <FaSearch size={10} color="#8e8e8e" />
            filter nodes
          </PaletteSearch>
          <PaletteBody>
            <PaletteList>
              <CategoryHead>
                <ChevronDown size={12} />
                common
              </CategoryHead>
              <CategoryBody>
                {commonNodes.map((n) => (
                  <PaletteNode key={n.label} node={n} />
                ))}
              </CategoryBody>
              <CategoryHead $gap={19}>
                <ChevronDown size={12} />
                function
              </CategoryHead>
              <CategoryBody>
                {functionNodes.map((n) => (
                  <PaletteNode key={n.label} node={n} />
                ))}
              </CategoryBody>
            </PaletteList>
            <PaletteScroll>
              <ArrowUp />
              <PaletteThumb />
              <ArrowDown />
            </PaletteScroll>
          </PaletteBody>
          <PaletteFoot>
            <FootButton>
              <FaAngleDoubleUp />
            </FootButton>
            <FootButton>
              <FaAngleDoubleDown />
            </FootButton>
          </PaletteFoot>
        </Palette>

        <Workspace>
          <WsTabs>
            <WsTab $active $w={199}>
              Save Table to PC
              <TabDot />
            </WsTab>
            <WsTab $w={200}>
              <FaLock size={11} />
              <FaBan size={12} />
              Write File From PC
            </WsTab>
            <WsTab $w={199}>
              <FaLock size={11} />
              <FaBan size={12} />
              Last Flow From Terry
            </WsTab>
          </WsTabs>
          <Canvas>
            <Wires width="713" height="792" viewBox="180 205 713 792" fill="none" stroke="#9e9e9e" strokeWidth="2.5">
              <path d="M462 325H519" />
              <path d="M741 325H820" />
              <path d="M746 325C775 325 785 335 780 343C770 362 700 366 640 377C580 387 520 395 520 410C520 422 540 425 556 425" />
              <path d="M893 654C830 654 760 652 740 660C720 668 727 682 757 685" />
            </Wires>
            <FlowNode $x={160} $y={104} $w={120} $color="#a2afbc">
              <FlowButton $side="left" $color="#a9b5c2" />
              <FlowIcon>
                <Glyph kind="inject" />
              </FlowIcon>
              <FlowLabel $pad={8}>timestamp</FlowLabel>
              <FlowPort $side="right" />
              <StatusDot />
            </FlowNode>
            <FlowNode $x={339} $y={104} $w={222} $color="#c28383" $selected>
              <FlowPort $side="left" />
              <FlowIcon>
                <Glyph kind="pacRead" />
              </FlowIcon>
              <FlowLabel $pad={8}>Read Parameters sTable</FlowLabel>
              <FlowPort $side="right" />
              <StatusDot />
            </FlowNode>
            <FlowNode $x={640} $y={104} $w={200} $color="#c6ae8b">
              <FlowPort $side="left" />
              <FlowIcon>
                <Glyph kind="fileOut" />
              </FlowIcon>
              <FlowLabel $italic>Write File</FlowLabel>
            </FlowNode>
            <FlowNode $x={379} $y={205} $w={121} $h={30} $color="#91a28c" $right>
              <FlowPort $side="left" />
              <FlowButton $side="right" $color="#91a28c" />
              <FlowIcon $right>
                <Glyph kind="debug" />
              </FlowIcon>
              <FlowLabel $italic $pad={33}>
                debug 2
              </FlowLabel>
              <StatusDot />
            </FlowNode>
            <FlowNode $x={540} $y={404} $w={200} $color="#c4b27e">
              <FlowPort $side="left" />
              <FlowIcon>
                <Glyph kind="csv" />
              </FlowIcon>
              <FlowLabel $italic $pad={8}>
                Convert sTable to Csv
              </FlowLabel>
            </FlowNode>
            <FlowNode $x={579} $y={464} $w={121} $h={30} $color="#91a28c" $right>
              <FlowPort $side="left" />
              <FlowButton $side="right" $color="#91a28c" />
              <FlowIcon $right>
                <Glyph kind="debug" />
              </FlowIcon>
              <FlowLabel $italic $pad={33}>
                debug 3
              </FlowLabel>
            </FlowNode>
          </Canvas>
          <HScroll>
            <ArrowLeftTri />
            <HThumb />
          </HScroll>
          <WsFoot>
            <ZoomButton>
              <FaSearch />
            </ZoomButton>
          </WsFoot>
        </Workspace>

        <Tray>
          <TrayHandle>
            <i />
          </TrayHandle>
          <TrayPanel>
            <TrayTitle>Edit pac read node</TrayTitle>
            <TrayActions>
              <TrayButton $w={70} $top={1}>
                Delete
              </TrayButton>
              <Spacer />
              <TrayButton $w={74}>Cancel</TrayButton>
              <TrayButton $w={63} $primary $left={16}>
                Done
              </TrayButton>
            </TrayActions>
            <TrayTabs>
              <TrayTab>
                <FaCog size={13} />
                Properties
              </TrayTab>
              <TabTools>
                <IconButton $active>
                  <FaCog size={13} />
                </IconButton>
                <IconButton>
                  <FaRegFileAlt size={15} />
                </IconButton>
                <IconButton>
                  <FrameIcon />
                </IconButton>
              </TabTools>
            </TrayTabs>
            <TrayForm>
              <FormRow>
                <FieldLabel>
                  <FaGlobeAmericas size={12} />
                  Device
                </FieldLabel>
                <Select $w={236} defaultValue="10.1.1.15:80">
                  <option>10.1.1.15:80</option>
                </Select>
                <SquareButton $w={34}>
                  <FaPencilAlt size={12} />
                </SquareButton>
                <SquareButton $w={32}>
                  <FaPlus size={11} />
                </SquareButton>
              </FormRow>
              <FormRow>
                <FieldLabel>
                  <BarsIcon />
                  Data Type
                </FieldLabel>
                <Select $w={220} defaultValue="String Table">
                  <option>String Table</option>
                </Select>
              </FormRow>
              <FormRow>
                <FieldLabel>
                  <FaTag size={12} />
                  Tag Name
                </FieldLabel>
                <TextInput $w={322} defaultValue="P_Parameters_sTable" />
              </FormRow>
              <FormRow>
                <FieldLabel>
                  <FaThumbtack size={12} />
                  Start Index
                </FieldLabel>
                <TextInput $w={84} placeholder="Blank for all" />
                <FieldLabel $w={91} $indent={19}>
                  <svg width="14" height="8" viewBox="0 0 14 8" fill="#555">
                    <path d="M0 4l3-3v2h8V1l3 3-3 3V5H3v2z" />
                  </svg>
                  Length
                </FieldLabel>
                <TextInput $w={84} />
              </FormRow>
              <FormRow>
                <FieldLabel>
                  <FaPencilAlt size={12} />
                  Value
                </FieldLabel>
                <TypedInput>
                  <TypeSelect $w={54}>
                    <Caret />
                    msg.
                  </TypeSelect>
                  <TypedValue>payload</TypedValue>
                </TypedInput>
              </FormRow>
              <FormRow>
                <FieldLabel>
                  <BarsIcon />
                  Topic
                </FieldLabel>
                <TypedInput $filled>
                  <TypeSelect>
                    <Caret />
                    Do not alter
                  </TypeSelect>
                </TypedInput>
              </FormRow>
              <FormRow>
                <FieldLabel>
                  <FaInfoCircle size={12} />
                  Node Name
                </FieldLabel>
                <TextInput $w={322} defaultValue="Read Parameters sTable" />
              </FormRow>
            </TrayForm>
            <TrayFoot>
              <FootBtn $w={30}>
                <FaBook size={12} color="#777" />
              </FootBtn>
              <EnableBtn $w={89}>
                <FaRegCircle size={12} />
                Enabled
              </EnableBtn>
            </TrayFoot>
          </TrayPanel>
        </Tray>
        <Gutter>
          <i />
        </Gutter>
        <Sidebar>
          <SideTabs>
            <SideTab>
              <FaBug size={13} />
              debug
            </SideTab>
            <SideTools>
              <IconButton>
                <FaInfo size={12} />
              </IconButton>
              <IconButton>
                <FaBook size={13} />
              </IconButton>
              <IconButton $active>
                <FaBug size={13} />
              </IconButton>
              <IconButton>
                <FaCog size={13} />
              </IconButton>
              <IconButton>
                <FaDatabase size={13} />
              </IconButton>
              <IconButton>
                <FaRegChartBar size={14} />
              </IconButton>
              <SideCaret />
            </SideTools>
          </SideTabs>
          <SideBar2>
            <FilterBtn $w={133}>
              <FaFilter size={11} />
              selected nodes
              <FilterCaret />
            </FilterBtn>
            <FilterBtn $w={60}>
              <FaTrash size={10} />
              all
              <FilterCaret />
            </FilterBtn>
          </SideBar2>
          <SideContent />
          <SideFoot>
            <MonitorBtn>
              <FaDesktop size={12} />
            </MonitorBtn>
          </SideFoot>
          <EsetBadge>
            <EsetClose>
              <X size={10} strokeWidth={4} />
            </EsetClose>
            <EsetMark>e</EsetMark>
          </EsetBadge>
        </Sidebar>
      </Main>
    </Frame>
  )
}
